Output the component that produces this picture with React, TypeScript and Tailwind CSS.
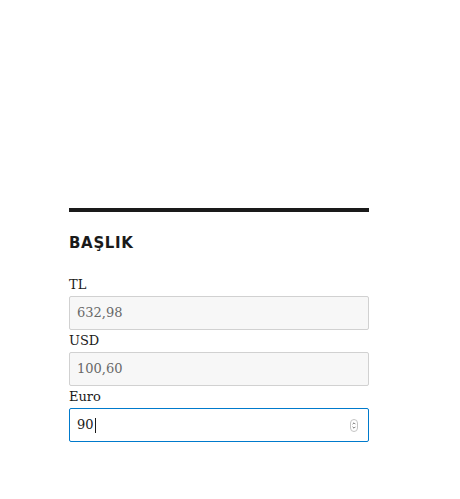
const serif = "font-['DejaVu_Serif',serif]";

type Field = { label: string; value: string; focused?: boolean };

const fields: Field[] = [
  { label: "TL", value: "632,98" },
  { label: "USD", value: "100,60" },
  { label: "Euro", value: "90", focused: true },
];

function Spinner() {
  return (
    <svg width="8" height="13" viewBox="0 0 8 13" className="shrink-0">
      <rect x="0.5" y="0.5" width="7" height="12" rx="3.5" fill="#fff" stroke="#c4c4c4" />
      <path d="M2.6 5.2 L4 3.8 L5.4 5.2" fill="none" stroke="#666" strokeWidth="0.9" />
      <path d="M2.6 7.8 L4 9.2 L5.4 7.8" fill="none" stroke="#666" strokeWidth="0.9" />
    </svg>
  );
}

export default function App() {
  return (
    <div className="min-h-[499px] w-[460px] bg-white pl-[69px] pt-[208px]">
      <section className="w-[300px]">
        <div className="h-[4px] bg-[#1a1a1a]" />
        <h2 className="mt-[21px] font-['DejaVu_Sans',sans-serif] text-[15px] font-bold uppercase leading-[20px] tracking-[0.045em] text-[#1a1a1a]">
          Başlık
        </h2>
        <div className="mt-[21px]">
          {fields.map((f) => (
            <div key={f.label}>
              <label className={`block ${serif} text-[13px] leading-[22px] text-[#1a1a1a]`}>{f.label}</label>
              {f.focused ? (
                <div className={`flex h-[34px] items-center rounded-[2px] border border-[#007acc] bg-white pl-[7px] pr-[10px] ${serif} text-[13px] text-[#1a1a1a]`}>
                  <span>{f.value}</span>
                  <span className="ml-[1px] h-[15px] w-[1px] bg-[#1a1a1a]" />
                  <span className="flex-1" />
                  <Spinner />
                </div>
              ) : (
                <div className={`flex h-[34px] items-center rounded-[2px] border border-[#d1d1d1] bg-[#f7f7f7] px-[7px] ${serif} text-[13px] text-[#686868]`}>
                  {f.value}
                </div>
              )}
            </div>
          ))}
        </div>
      </section>
    </div>
  );
}
